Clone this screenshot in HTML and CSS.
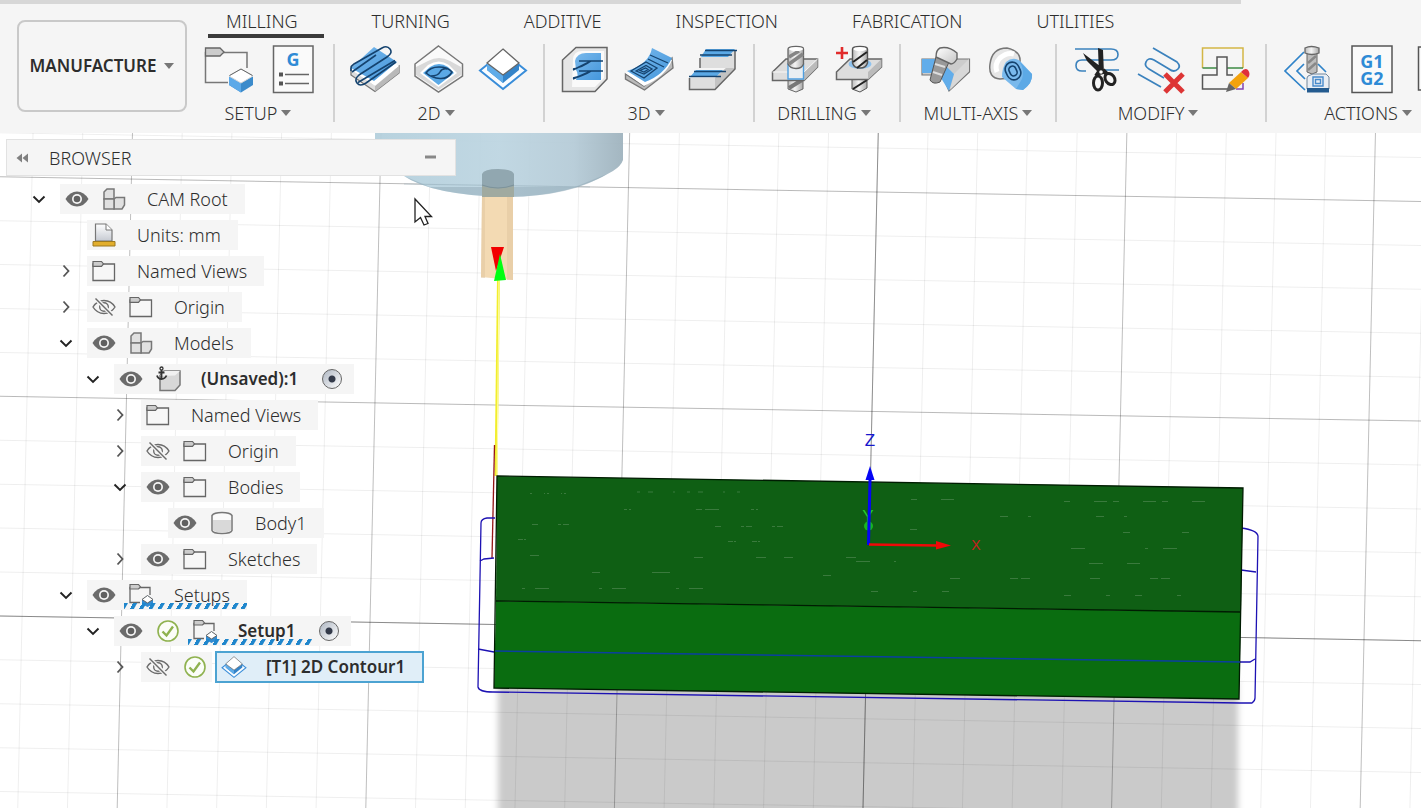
FILE: index.html
```html
<!DOCTYPE html>
<html lang="en">
<head>
<meta charset="utf-8">
<title>Manufacture</title>
<link rel="stylesheet" href="styles.css">
</head>
<body>
<svg class="defs" aria-hidden="true">
  <defs>
    <linearGradient id="steel" x1="0" y1="0" x2="1" y2="0"><stop offset="0" stop-color="#bdbdbd"/><stop offset=".45" stop-color="#f4f4f4"/><stop offset="1" stop-color="#a8a8a8"/></linearGradient>
    <linearGradient id="plate" x1="0" y1="0" x2="1" y2="1"><stop offset="0" stop-color="#fff"/><stop offset="1" stop-color="#c4c4c4"/></linearGradient>
    <linearGradient id="sky" x1="0" y1="0" x2="1" y2="1"><stop offset="0" stop-color="#79b9ec"/><stop offset="1" stop-color="#4597dc"/></linearGradient>
    <linearGradient id="paper" x1="0" y1="0" x2="0" y2="1"><stop offset="0" stop-color="#fff"/><stop offset="1" stop-color="#c6cad2"/></linearGradient>
  </defs>
  <symbol id="i-right" viewBox="0 0 24 24"><path d="M9.500 6.500 14.500 12 9.500 17.500" fill="none" stroke="#555" stroke-width="1.800"/></symbol>
  <symbol id="i-down" viewBox="0 0 24 24"><path d="M6.500 9.500 12 15 17.500 9.500" fill="none" stroke="#222" stroke-width="1.900"/></symbol>
  <symbol id="i-eye" viewBox="0 0 24 24"><path d="M0.500 12Q5 4.500 12 4.500T23.500 12Q19 19.500 12 19.500T.5 12Z" fill="#6b6b6b"/><circle cx="12" cy="12" r="5" fill="#f5f5f5"/><circle cx="12" cy="12" r="3.300" fill="#606060"/></symbol>
  <symbol id="i-hidden" viewBox="0 0 24 24"><g fill="none" stroke="#6b6b6b" stroke-width="1.400"><path d="M1 12Q5 5.500 12 5.500T23 12Q19 18.500 12 18.500T1 12Z"/><circle cx="12" cy="12" r="4.300"/><path d="M4 4 21 20.500" stroke="#f5f5f5" stroke-width="4"/><path d="M3.500 3.500 20.500 20.500"/></g></symbol>
  <symbol id="i-folder" viewBox="0 0 24 24"><path d="M1 5H22.500V21.500H1Z" fill="#f7f7f7" stroke="#666" stroke-width="1.300"/><path d="M1 2.500H9.500L11.500 5 9.500 7.300H1Z" fill="#ccc" stroke="#666" stroke-width="1.200"/></symbol>
  <symbol id="i-blocks" viewBox="0 0 24 24"><g fill="#e0e0e0" stroke="#777" stroke-width="1.500"><path d="M2 5 5 2H12V12H2Z"/><path d="M12 12 14 10.500H22.500V18L20 22H12Z"/><path d="M2 12H12V22H2Z"/></g></symbol>
  <symbol id="i-units" viewBox="0 0 24 24"><path d="M3.500 1H14L20 7V18H3.500Z" fill="url(#paper)" stroke="#777" stroke-width="1.200"/><path d="M14 1V7H20" fill="#fff" stroke="#777"/><path d="M1 18.500H23V23H1Z" fill="#e2ae2c" stroke="#9c7920"/></symbol>
  <symbol id="i-anchor" viewBox="0 0 26 26"><path d="M5 9.500 9 5H25V19L20 24.500H5Z" fill="#d8d8d8" stroke="#777" stroke-width="1.500"/><path d="M5 10 9 5H25L20 9.500Z" fill="#f1f1f1"/><path d="M6.500 4V13M2 9.500Q3 13 6.500 13T11.500 9.500M3.500 6.500H9.500" fill="none" stroke="#333" stroke-width="1.800"/><circle cx="6.500" cy="2.500" r="1.500" fill="#fff" stroke="#333" stroke-width="1.300"/></symbol>
  <symbol id="i-body" viewBox="0 0 24 24"><path d="M2 4.500V19.500Q3 22.500 12 22.500T22 19.500V4.500Q20 1.500 12 1.500T2 4.500Z" fill="#fafafa" stroke="#777" stroke-width="1.500"/><path d="M3 9H21V19Q19 21.500 12 21.500T3 19Z" fill="#d9d9d9"/></symbol>
  <symbol id="i-setup" viewBox="0 0 26 24"><path d="M12 19.500H2V4.500H22V12" fill="none" stroke="#666" stroke-width="1.300"/><path d="M2 1.500H10.500L12.500 4 10.500 6H2Z" fill="#ccc" stroke="#666" stroke-width="1.200"/><path d="M14 16.500 19.500 12.500 25 16.500V21L19.500 24 14 21Z" fill="#328bd1"/><path d="M14 16.500 19.500 12.500 25 16.500 19.500 20Z" fill="#fff" stroke="#666"/></symbol>
  <symbol id="i-ok" viewBox="0 0 24 24"><circle cx="12" cy="12" r="10" fill="#fbfdf8" stroke="#8fb24f" stroke-width="1.600"/><path d="M6.500 12.500 10.500 16.500 17 7.500" fill="none" stroke="#8fb24f" stroke-width="2.400"/></symbol>
  <symbol id="i-contour" viewBox="0 0 50 50"><path d="M2 26.500 25 8 48 26.500 25 45Z" fill="#f9fcff" stroke="#398dd9" stroke-width="2"/><path d="M9 19 25 31 41 19V26L25 39 9 26Z" fill="#3484c9"/><path d="M9 19 25 31V39L9 26Z" fill="#5face9"/><path d="M25 5 41 19 25 31 9 19Z" fill="#fff" stroke="#666" stroke-width="1.300"/></symbol>
</svg>

<div class="app">
  <header class="ribbon">
    <button class="workspace" type="button">MANUFACTURE <i class="caret"></i></button>
    <div class="ribbon-main">
      <nav class="tabs" aria-label="Ribbon tabs">
        <button type="button" class="tab active">MILLING</button>
        <button type="button" class="tab">TURNING</button>
        <button type="button" class="tab">ADDITIVE</button>
        <button type="button" class="tab">INSPECTION</button>
        <button type="button" class="tab">FABRICATION</button>
        <button type="button" class="tab">UTILITIES</button>
      </nav>
      <div class="groups">
        <section class="group">
          <div class="tools">
            <button type="button" class="tool" aria-label="New setup"><svg viewBox="0 0 50 50"><path d="M24 38.500H1.500V8.500H43V24" fill="#f7f7f7" stroke="#777" stroke-width="1.500"/><path d="M1.500 4H16L20 8 16 12H1.500Z" fill="#ccc" stroke="#666" stroke-width="1.300"/><path d="M25 32 37 25 49 32V41L37 48.500 25 41Z" fill="#3b8bcb"/><path d="M25 32 37 39V48.500L25 41Z" fill="#5ca9e8"/><path d="M25 32 37 25 49 32 37 39Z" fill="#fff" stroke="#d9d9d9"/><path d="M25.500 31.500 37 25 48.500 31.500" fill="none" stroke="#666"/></svg></button>
            <button type="button" class="tool" aria-label="NC program"><svg viewBox="0 0 50 50"><path d="M5.500 2H45V48.500H5.500Z" fill="#fafafa" stroke="#666" stroke-width="1.500"/><text class="glyph" x="25" y="22">G</text><path d="M11 28.500H15V32.500H11ZM11 37.500H15V41.500H11Z" fill="#555"/><path d="M17 30.500H41M17 39.500H41" stroke="#666" stroke-width="1.400"/></svg></button>
          </div>
          <button type="button" class="menu">SETUP<i class="caret"></i></button>
        </section>
        <section class="group">
          <div class="tools">
            <button type="button" class="tool" aria-label="2D adaptive"><svg viewBox="0 0 50 50"><path d="M1 25 25 41 49 22V29L25 47.500 1 31Z" fill="#ddd" stroke="#777" stroke-width="1.300"/><path d="M25 41 49 22V29L25 47.500Z" fill="#b9b9b9"/><path d="M1 26 25 7 49 22 25 42Z" fill="#fff"/><path d="M24 3 47 18 24 37 1 24Z" fill="url(#sky)"/><path d="M8 38.500 45 16.500M1 27V24Q1 22 4 20L32 4Q37 1 40 5T37 13L9 31Q4 35 7 39T16 39L46 18M2 28 26 11" fill="none" stroke="#15436f" stroke-width="1.600"/></svg></button>
            <button type="button" class="tool" aria-label="2D pocket"><svg viewBox="0 0 50 50"><path d="M24.500 2 48.500 20V32L24.500 48 1 32V20Z" fill="#fafafa" stroke="#777" stroke-width="1.500"/><path d="M2 23 14 17Q25 11 36 17L47 23V31L24.500 46 2 31Z" fill="#d9d9d9"/><path d="M6 29 14 21Q25 14 35 21L43 29 24.500 43Z" fill="#fff"/><path d="M9 29 16 23Q25 17 34 23L40 29 24.500 41Z" fill="#5ba9e6"/><path d="M12 29Q16 23 25 23T38 28Q34 35 26 34.500T12 29ZM17 32Q24 32 26 28T33 25" fill="none" stroke="#15436f" stroke-width="1.600"/></svg></button>
            <button type="button" class="tool" aria-label="2D contour"><svg viewBox="0 0 50 50"><use href="#i-contour"/></svg></button>
          </div>
          <button type="button" class="menu">2D<i class="caret"></i></button>
        </section>
        <section class="group">
          <div class="tools">
            <button type="button" class="tool" aria-label="3D adaptive"><svg viewBox="0 0 50 50"><path d="M2.500 47.500V16L16 3.500H47V35L35 47.500Z" fill="#e6e6e6" stroke="#666" stroke-width="1.500"/><path d="M13 15Q14 7 22 7H44V34L35 43H12Z" fill="#fafafa"/><path d="M15 17Q17 9 26 9H41V36H16Q19 30 16 26Z" fill="url(#sky)"/><path d="M19 17H43M13 26 31 17M19 27H43M13 35 31 27M13 25Q23 23 31 17M13 34Q23 32 31 27" fill="none" stroke="#15436f" stroke-width="1.500"/></svg></button>
            <button type="button" class="tool" aria-label="3D pocket"><svg viewBox="0 0 50 50"><path d="M1.500 30 20 42 48 14 49 24 20.500 46 1.500 35Z" fill="#bbb" stroke="#777" stroke-width="1.400"/><path d="M1.500 29Q20 22 27 8L48 16Q42 32 20 42Z" fill="#fff"/><path d="M3 27Q25 20 28 4L48 14Q40 31 21 38Z" fill="url(#sky)"/><path d="M7 27 22 18 33 24 20 34ZM12 27 22 21.500 28 25 20 30ZM24 15 40 23M26 11 44 19M16 26.500 21.500 24 24 25.500 20 28Z" fill="none" stroke="#15436f" stroke-width="1.300"/></svg></button>
            <button type="button" class="tool" aria-label="Parallel"><svg viewBox="0 0 50 50"><path d="M1.500 45.500V34H27L38 24H12V12L17 7H47V25L27 45.500Z" fill="#dedede"/><path d="M27 34 38 24H47L27 45.500Z" fill="#c3c3c3"/><path d="M1.500 34V45.500H27L47 25V7M12 14V24" fill="none" stroke="#666" stroke-width="1.500"/><path d="M18 5H47L40 13H13ZM8 26H35L28 33H2Z" fill="#5ba9e6"/><path d="M17 6.500H49M12 11H44M6 27.500H38M1 32.500H33" stroke="#15436f" stroke-width="1.700"/></svg></button>
          </div>
          <button type="button" class="menu">3D<i class="caret"></i></button>
        </section>
        <section class="group">
          <div class="tools">
            <button type="button" class="tool" aria-label="Drill"><svg viewBox="0 0 50 50"><path d="M18 35H33V45L26 48 18 45Z" fill="url(#steel)" stroke="#666"/><path d="M19 44 32 36" stroke="#777" stroke-width="4"/><path d="M2.500 28 16 15H47.500V23L34 36.500H2.500Z" fill="#ddd" stroke="#666" stroke-width="1.500"/><path d="M34 28V36.500L47.500 23V15Z" fill="#bbb"/><path d="M2.500 28H34L47.500 15" fill="none" stroke="#f7f7f7"/><path d="M18 20H33.500V35H18Z" fill="#e9eef2" stroke="#4f9fe0" stroke-width="1.400"/><path d="M18 5Q18 2.500 26 2.500T33.500 5V20Q32 24.500 26 24.500T18 20Z" fill="url(#steel)" stroke="#666" stroke-width="1.300"/><path d="M19 20 33 10M19 13 29 7" stroke="#858585" stroke-width="3.500"/><ellipse cx="26" cy="5" rx="7" ry="2" fill="#fff"/></svg></button>
            <button type="button" class="tool" aria-label="Hole recognition"><svg viewBox="0 0 50 50"><path d="M18 33H33V44L26 48 18 45Z" fill="url(#steel)" stroke="#555"/><path d="M19 45 33 36" stroke="#222" stroke-width="2"/><path d="M2.500 28 16 15H47.500V23L34 35.500H2.500Z" fill="#ddd" stroke="#666" stroke-width="1.500"/><path d="M34 28V35.500L47.500 23V15Z" fill="#bbb"/><ellipse cx="26" cy="20" rx="11.500" ry="5" fill="#8fc3ef"/><path d="M18.500 5Q18.500 2.500 26 2.500T33.500 5V19Q32 24 26 24T18.500 19Z" fill="url(#steel)" stroke="#555" stroke-width="1.400"/><path d="M19 18 33 8M23 24 33 16" stroke="#222" stroke-width="2"/><ellipse cx="26" cy="5" rx="6.500" ry="2" fill="#fff"/><path d="M2 9H14M8 3V15" stroke="#e12b2b" stroke-width="2.600"/></svg></button>
          </div>
          <button type="button" class="menu">DRILLING<i class="caret"></i></button>
        </section>
        <section class="group wide">
          <div class="tools">
            <button type="button" class="tool" aria-label="Swarf"><svg viewBox="0 0 50 50"><path d="M1 15H48.500V28L28 47 21 31H1Z" fill="#ccc" stroke="#777" stroke-width="1.200"/><path d="M48 15V27L29 46 33 30Z" fill="#d8d8d8"/><path d="M1 15H18L33 30 28 47 20 34 11 29H1Z" fill="#62adea"/><path d="M15 13 28 18 19 38Q12 41 9 36Z" fill="#999" stroke="#555"/><path d="M14 20 24 23M12 28 21 31" stroke="#ddd" stroke-width="2"/><path d="M19 4Q28 2 36 9V15Q33 20 30 20L15 13Q15 6 19 4Z" fill="url(#plate)" stroke="#666" stroke-width="1.400"/></svg></button>
            <button type="button" class="tool" aria-label="Multi-axis contour"><svg viewBox="0 0 50 50"><path d="M5 20Q7 4 22 4 36 7 35 18L26 34 15 35Q3 34 5 20Z" fill="#e6e6e6" stroke="#777" stroke-width="1.500"/><path d="M12 28Q9 20 15 14 22 8 29 10" fill="none" stroke="#fff" stroke-width="5"/><path d="M21 18Q28 12 35 17L47 30Q48 39 38 46L31 45 17 33Q17 24 21 18Z" fill="#79b9ec"/><path d="M34 17 47 30Q48 39 38 46L31 45 37 35Q40 26 34 17Z" fill="#5ca9e6"/><g fill="none" stroke="#15436f" stroke-width="1.600" transform="rotate(-25 28 27)"><rect x="21" y="18" width="14" height="18" rx="7"/><rect x="24.500" y="22" width="7" height="10" rx="3.500"/></g></svg></button>
          </div>
          <button type="button" class="menu">MULTI-AXIS<i class="caret"></i></button>
        </section>
        <section class="group">
          <div class="tools">
            <button type="button" class="tool" aria-label="Trim"><svg viewBox="0 0 50 50"><path d="M3 5H39Q46 5 46 10.500T39 16H10Q4 16 4 21.500T10 27H14M33 26H47" fill="none" stroke="#3b82bd" stroke-width="1.600"/><path d="M26 4 31 6 32 30 27 31ZM11 9 33 26 29 31 15 17Z" fill="#222"/><path d="M28 26 24 32M31 26 36 31" stroke="#222" stroke-width="4"/><ellipse cx="26" cy="39" rx="4.500" ry="7" fill="#f5f5f5" stroke="#222" stroke-width="3"/><ellipse cx="38" cy="35" rx="4.500" ry="6" transform="rotate(-35 38 35)" fill="#f5f5f5" stroke="#222" stroke-width="3"/><circle cx="29" cy="28" r="1.800" fill="#fff"/></svg></button>
            <button type="button" class="tool" aria-label="Delete passes"><svg viewBox="0 0 50 50"><path d="M17 4 41 18Q45 22 42 25 38 29 33 25L18 16Q12 13 10 18 8 22 13 25L28 34M2 30 25 43" fill="none" stroke="#3b82bd" stroke-width="1.700"/><path d="M29 30 47 48M47 30 29 48" stroke="#dd3535" stroke-width="5"/></svg></button>
            <button type="button" class="tool" aria-label="Edit passes"><svg viewBox="0 0 50 50"><path d="M2.500 24V4H43V24" fill="none" stroke="#d3b646" stroke-width="1.500"/><path d="M2.500 24H17M27 24H43" stroke="#3c8b44" stroke-width="1.500"/><path d="M17 24V13H27V31H33M17 24V31H2.500V45H30" fill="none" stroke="#555" stroke-width="1.500"/><path d="M36 45H43V39" fill="none" stroke="#8344b0" stroke-width="1.500"/><path d="M29 39 41 28 48 34 36 45Z" fill="#f3a20d"/><path d="M41 28Q45 23 48 26 51 30 48 34Z" fill="#e02f3b"/><path d="M26 48 29 39 36 45Z" fill="#666"/></svg></button>
          </div>
          <button type="button" class="menu">MODIFY<i class="caret"></i></button>
        </section>
        <section class="group last">
          <div class="tools">
            <button type="button" class="tool" aria-label="Simulate"><svg viewBox="0 0 50 50"><path d="M22 8 3 27 23 46M22 20 15 27 23 35M36 20 44 28" fill="none" stroke="#2f83c9" stroke-width="1.700"/><path d="M25 9H35V28L30 30 25 28Z" fill="#bdbdbd" stroke="#666"/><path d="M26 19 34 12M26 26 34 19" stroke="#888" stroke-width="2.500"/><path d="M23 4Q29 1 37 4V9Q30 12 23 9Z" fill="url(#steel)" stroke="#666" stroke-width="1.300"/><path d="M26 32 31 30H44L47 33V45H25V34Z" fill="#e9eef4" stroke="#71869c"/><path d="M25 44H47V48.500H25Z" fill="#245b8f"/><path d="M31 33H41V42H31ZM33.500 35.500H38.500V39.500H33.500Z" fill="none" stroke="#478acb" stroke-width="1.400"/></svg></button>
            <button type="button" class="tool" aria-label="Post process"><svg viewBox="0 0 50 50"><path d="M6 2H46V48.500H6Z" fill="#fafafa" stroke="#555" stroke-width="1.500"/><text class="glyph" x="26" y="24">G1</text><text class="glyph" x="26" y="41">G2</text></svg></button>
            <button type="button" class="tool" aria-label="Setup sheet"><svg viewBox="0 0 50 50"><path d="M8.500 3H45V46H8.500Z" fill="#fafafa" stroke="#555" stroke-width="1.500"/></svg></button>
          </div>
          <button type="button" class="menu">ACTIONS<i class="caret"></i></button>
        </section>
      </div>
    </div>
  </header>

  <main class="stage">
    <svg class="scene" viewBox="0 133 1421 675" preserveAspectRatio="xMinYMin slice" role="img" aria-label="Model view">
      <defs>
        <linearGradient id="holder" x1="0" y1="0" x2="1" y2="0"><stop offset="0" stop-color="#b3cfdc"/><stop offset=".5" stop-color="#bdd5e1"/><stop offset=".8" stop-color="#b5cbd7"/><stop offset="1" stop-color="#9eb2bd"/></linearGradient>
        <filter id="soft" x="-5%" y="-10%" width="110%" height="120%"><feGaussianBlur stdDeviation="3"/></filter>
      </defs>
      <path d="M498 680H1238V830H498Z" fill="#cacaca" filter="url(#soft)"/>
      <g transform="matrix(1 .0174 -.0226 1 867 631)" fill="none">
        <path d="M-895.100-160H650" stroke="#000" stroke-opacity=".065" stroke-width="760" stroke-dasharray="1 48.700"/>
        <path d="M-200-527.300V240" stroke="#000" stroke-opacity=".065" stroke-width="1600" stroke-dasharray="1 42.900"/>
        <path d="M-994.500-160H650" stroke="#000" stroke-opacity=".2" stroke-width="760" stroke-dasharray="1 247.500"/>
        <path d="M-200-439.500V240" stroke="#000" stroke-opacity=".22" stroke-width="1600" stroke-dasharray="1 218.500"/>
        <path d="M0-540V200M-900 0H600" stroke="#000" stroke-opacity=".25"/>
      </g>
      <path d="M375 133H623V160Q621 166 613 171 570 197 505 197 432 195 404 176L375 160Z" fill="url(#holder)" fill-opacity=".94"/>
      <path d="M404 176Q432 195 505 197 570 197 607 174L575 187H430Z" fill="#8ca5b1" fill-opacity=".45"/>
      <path d="M404 184 590 187" fill="none" stroke="#89a3ae" stroke-opacity=".4"/>
      <path d="M482 195H513V280L481 277Z" fill="#f3dab3"/>
      <path d="M507 196H513V280H507ZM482 196H485V278H481Z" fill="#dfc49d" fill-opacity=".5"/>
      <path d="M482 174Q484 169 498 169T514 174V197H482Z" fill="#91a7b0"/>
      <path d="M482 186Q498 191 514 186V197H482Z" fill="#a0aaa0"/>
      <path d="M482 185Q498 191 514 185" fill="none" stroke="#687d83" stroke-opacity=".5"/>
      <path d="M498.500 278 496 476" stroke="#f2ee2c" stroke-width="3"/>
      <path d="M499 280 497 476" stroke="#fffdb0" stroke-width="1"/>
      <path d="M494.500 445 492 558" stroke="#941616" stroke-width="1.300"/>
      <path d="M491 247H504L496 271Z" fill="#f20000"/>
      <path d="M500 254 506 280 494 281Z" fill="#00ff12"/>
      <g fill="none" stroke="#1d12b3" stroke-width="1.300">
        <path d="M495 518 487 518Q481 519 481 523L478 687Q479 692 493 692L1240 703 1252 703Q1255 701 1255 698L1258 536Q1257 530 1241 528"/>
        <path d="M480 561 484 559 494 558M1241 570 1256 572M478 649 494 652M1240 662 1250 662 1255 659"/>
      </g>
      <path d="M497 476 1243 488 1241 612 496 601Z" fill="#0f5f14"/>
      <path d="M496 601 1241 612 1239 699 494 688Z" fill="#0a6d10"/>
      <path d="M496 601 1241 612M497 476 1243 488 1239 699 494 688Z" fill="none" stroke="#001c02" stroke-width="1.300"/>
      <path d="M495 651 1240 662" stroke="#0b3fa0" stroke-width="1.500"/>
      <g fill="none" stroke="#9fb89f" stroke-opacity=".3" stroke-width="1">
        <path d="M530 493.500H572" stroke-dasharray="2 12 1 2"/><path d="M637 492H741" stroke-dasharray="3 8 5 20 2 12"/><path d="M624 509.500H775" stroke-dasharray="3 2 2 65 6 3 14 32"/><path d="M532 524.500H575M715 526.500H800" stroke-dasharray="6 20 3 2"/>
        <path d="M518 539.500H528M728 541.500H760" stroke-dasharray="5 1 2 16"/><path d="M530 555.500H545M694 557.500H870" stroke-dasharray="9 53 10 18"/><path d="M592 572.500H672M823 575.500H833" stroke-dasharray="8 52 18 2"/><path d="M522 588.500H720" stroke-dasharray="3 10 14 50"/>
        <path d="M911 499.500H960M1064 501.500H1210" stroke-dasharray="6 24 13 6"/><path d="M1000 516.500H1155" stroke-dasharray="8 20 3 65"/><path d="M910 529.500H925M1123 532.500H1191" stroke-dasharray="7 52"/><path d="M1071 548.500H1220" stroke-dasharray="14 60 3 15"/>
        <path d="M1089 563.500H1140M856 561.500H896" stroke-dasharray="14 24"/><path d="M950 578.500H1215" stroke-dasharray="10 50 8 3 9 60"/><path d="M871 591.500H955M1064 595.500H1205" stroke-dasharray="7 35 4 25"/>
      </g>
      <text class="axis" x="870" y="446" fill="#1616cc">Z</text>
      <text class="axis" x="868" y="522" fill="#25cc2c">Y</text>
      <circle cx="868.500" cy="526" r="4.500" fill="#18b521"/>
      <path d="M868.500 545 870 480" stroke="#0505f5" stroke-width="3"/>
      <path d="M870 466 874.500 480H865.500Z" fill="#0505f5"/>
      <path d="M869 544.500 937 545.500" stroke="#f00808" stroke-width="2.500"/>
      <path d="M936 541 951 545.500 936 549.500Z" fill="#f00808"/>
      <text class="axis small" x="976" y="550" fill="#c92020">X</text>
      <path d="M415 199V222L420.500 217.500 424 225 428 223.500 425 216.500H431.500Z" fill="#fff" stroke="#222" stroke-width="1.300"/>
    </svg>

    <aside class="browser">
      <div class="browser-head">
        <button type="button" class="bare" aria-label="Collapse browser"><svg width="32" height="24" viewBox="0 0 32 24"><path d="M15 7.500V16.500L9.500 12ZM21 7.500V16.500L15.500 12Z" fill="#808080"/></svg></button>
        <h2>BROWSER</h2>
        <button type="button" class="bare" aria-label="Minimize"><svg width="50" height="24" viewBox="0 0 50 24"><path d="M20 9.500H31V12.500H20Z" fill="#888"/></svg></button>
      </div>
      <ul class="tree">
        <li class="row l0"><button type="button" class="twist" aria-label="Collapse"><svg><use href="#i-down"/></svg></button><div class="item"><span class="slot"><svg><use href="#i-eye"/></svg></span><span class="slot"><svg><use href="#i-blocks"/></svg></span><span class="label">CAM Root</span></div></li>
        <li class="row l1"><span class="twist"></span><div class="item"><span class="slot"><svg><use href="#i-units"/></svg></span><span class="label">Units: mm</span></div></li>
        <li class="row l1"><button type="button" class="twist" aria-label="Expand"><svg><use href="#i-right"/></svg></button><div class="item"><span class="slot"><svg><use href="#i-folder"/></svg></span><span class="label">Named Views</span></div></li>
        <li class="row l1"><button type="button" class="twist" aria-label="Expand"><svg><use href="#i-right"/></svg></button><div class="item"><span class="slot"><svg><use href="#i-hidden"/></svg></span><span class="slot"><svg><use href="#i-folder"/></svg></span><span class="label">Origin</span></div></li>
        <li class="row l1"><button type="button" class="twist" aria-label="Collapse"><svg><use href="#i-down"/></svg></button><div class="item"><span class="slot"><svg><use href="#i-eye"/></svg></span><span class="slot"><svg><use href="#i-blocks"/></svg></span><span class="label">Models</span></div></li>
        <li class="row l2"><button type="button" class="twist" aria-label="Collapse"><svg><use href="#i-down"/></svg></button><div class="item"><span class="slot"><svg><use href="#i-eye"/></svg></span><span class="slot"><svg class="large"><use href="#i-anchor"/></svg></span><span class="label strong">(Unsaved):1</span><input type="radio" name="component" class="dial" aria-label="Activate component" checked></div></li>
        <li class="row l3"><button type="button" class="twist" aria-label="Expand"><svg><use href="#i-right"/></svg></button><div class="item"><span class="slot"><svg><use href="#i-folder"/></svg></span><span class="label">Named Views</span></div></li>
        <li class="row l3"><button type="button" class="twist" aria-label="Expand"><svg><use href="#i-right"/></svg></button><div class="item"><span class="slot"><svg><use href="#i-hidden"/></svg></span><span class="slot"><svg><use href="#i-folder"/></svg></span><span class="label">Origin</span></div></li>
        <li class="row l3"><button type="button" class="twist" aria-label="Collapse"><svg><use href="#i-down"/></svg></button><div class="item"><span class="slot"><svg><use href="#i-eye"/></svg></span><span class="slot"><svg><use href="#i-folder"/></svg></span><span class="label">Bodies</span></div></li>
        <li class="row l4"><span class="twist"></span><div class="item"><span class="slot"><svg><use href="#i-eye"/></svg></span><span class="slot"><svg><use href="#i-body"/></svg></span><span class="label">Body1</span></div></li>
        <li class="row l3"><button type="button" class="twist" aria-label="Expand"><svg><use href="#i-right"/></svg></button><div class="item"><span class="slot"><svg><use href="#i-eye"/></svg></span><span class="slot"><svg><use href="#i-folder"/></svg></span><span class="label">Sketches</span></div></li>
        <li class="row l1"><button type="button" class="twist" aria-label="Collapse"><svg><use href="#i-down"/></svg></button><div class="item"><span class="slot"><svg><use href="#i-eye"/></svg></span><span class="hatched"><span class="slot"><svg class="large"><use href="#i-setup"/></svg></span><span class="label">Setups</span></span></div></li>
        <li class="row l2"><button type="button" class="twist" aria-label="Collapse"><svg><use href="#i-down"/></svg></button><div class="item"><span class="slot"><svg><use href="#i-eye"/></svg></span><span class="slot"><svg><use href="#i-ok"/></svg></span><span class="hatched"><span class="slot"><svg class="large"><use href="#i-setup"/></svg></span><span class="label strong">Setup1</span></span><input type="radio" name="setup" class="dial" aria-label="Activate setup" checked></div></li>
        <li class="row l3"><button type="button" class="twist" aria-label="Expand"><svg><use href="#i-right"/></svg></button><div class="item"><span class="slot"><svg><use href="#i-hidden"/></svg></span><span class="slot"><svg><use href="#i-ok"/></svg></span></div><div class="item selected"><span class="slot"><svg class="large"><use href="#i-contour"/></svg></span><span class="label strong">[T1] 2D Contour1</span></div></li>
      </ul>
    </aside>
  </main>
</div>
</body>
</html>
```
FILE: styles.css
```css
* { box-sizing: border-box; }
body {
  margin: 0;
  font-family: "Noto Sans", sans-serif;
  font-size: 18px;
  font-weight: 300;
  line-height: 24px;
  color: #2d2d2d;
  background: #fff;
}
button {
  border: 0;
  padding: 0;
  background: none;
  color: inherit;
  font: inherit;
  white-space: nowrap;
}
.defs { position: absolute; width: 0; height: 0; }
.app { display: flex; flex-direction: column; height: 100vh; overflow: hidden; }

/* Ribbon */
.ribbon {
  position: relative;
  display: flex;
  flex: none;
  gap: 2px;
  padding: 9px 0 11px 17px;
  background: #f5f5f5;
  overflow: hidden;
}
.ribbon::before {
  content: "";
  position: absolute;
  top: 0;
  left: 0;
  width: 1241px;
  height: 4px;
  background: #d7d7d7;
}
.workspace {
  flex: none;
  display: flex;
  align-items: center;
  justify-content: center;
  gap: 8px;
  width: 170px;
  height: 92px;
  margin-top: 11px;
  border: 2px solid #c9c9c9;
  border-radius: 8px;
  font-size: 17px;
  font-weight: 600;
}
.caret {
  display: inline-block;
  border: 5px solid transparent;
  border-top: 6px solid #777;
  border-bottom: 0;
}
.ribbon-main { flex: 1; min-width: 0; }
.tabs { display: flex; gap: 30px; padding-left: 19px; }
.tab { position: relative; height: 29px; padding: 0 26px 5px 18px; }
.tab.active::after {
  content: "";
  position: absolute;
  left: 0;
  right: 0;
  bottom: 0;
  height: 4px;
  background: #3b3b3b;
}
.groups { display: flex; padding-top: 6px; }
.group {
  flex: none;
  display: flex;
  flex-direction: column;
  align-items: center;
  gap: 7px;
  padding: 0 15px;
  border-right: 2px solid #d2d2d2;
  height: 78px;
}
.group.wide { padding: 0 20px; }
.group.last { border-right: 0; }
.tools { display: flex; gap: 14px; }
.tool { width: 50px; height: 50px; }
.tool svg { display: block; width: 50px; height: 50px; }
.menu { display: flex; align-items: center; gap: 4px; padding-right: 6px; font-size: 18px; }
.wide .menu { padding-right: 0; }
.glyph { font-family: "Noto Sans", sans-serif; font-size: 18px; font-weight: 700; fill: #2f8bd6; text-anchor: middle; }

/* Model view */
.stage { flex: 1; display: grid; min-height: 0; overflow: hidden; }
.stage > * { grid-area: 1 / 1; }
.scene { width: 100%; height: 100%; min-height: 0; }
.axis { font: 17px "Liberation Sans", sans-serif; text-anchor: middle; }
.axis.small { font-size: 14px; }

/* Browser panel */
.browser { justify-self: start; align-self: start; width: 456px; padding: 6px 0 0 6px; }
.browser-head {
  display: flex;
  align-items: center;
  height: 37px;
  background: #f5f5f5;
  border: 1px solid #e2e2e2;
}
.browser-head h2 { flex: 1; margin: 0; padding-left: 10px; font-size: 18px; font-weight: 300; }
.bare, .bare svg { display: block; }
.tree { list-style: none; margin: 0; padding: 5px 0 0; }
.row { display: flex; align-items: center; height: 36px; padding-left: 12px; white-space: nowrap; }
.l1 { padding-left: 39px; }
.l2 { padding-left: 66px; }
.l3 { padding-left: 93px; }
.l4 { padding-left: 120px; }
.twist { flex: none; display: grid; place-items: center; width: 42px; height: 30px; }
.row svg { display: block; width: 24px; height: 24px; }
.row svg.large { width: 26px; height: 26px; }
.item { display: flex; align-items: center; gap: 3px; height: 30px; background: #f5f5f5; }
.slot { flex: none; display: grid; place-items: center; width: 34px; }
.label { padding: 0 17px 0 13px; }
.strong { font-size: 17px; font-weight: 600; }
.hatched { position: relative; display: flex; align-items: center; gap: 3px; }
.hatched::after {
  content: "";
  position: absolute;
  left: 0;
  right: 0;
  bottom: -1px;
  height: 6px;
  background: repeating-linear-gradient(120deg, #1f86cc 0 3px, transparent 4px 8px);
}
.dial {
  appearance: none;
  width: 20px;
  height: 20px;
  margin: 0 12px 0 4px;
  border: 1px solid #666;
  border-radius: 50%;
  background: radial-gradient(circle, #333a4a 0 3px, transparent 4px), linear-gradient(135deg, #aeb6c2, #fff);
}
.selected {
  height: 32px;
  margin-left: 3px;
  background: #e0eef8;
  border: 2px solid #4ca3d2;
}
.selected .label { padding-left: 12px; }
```
